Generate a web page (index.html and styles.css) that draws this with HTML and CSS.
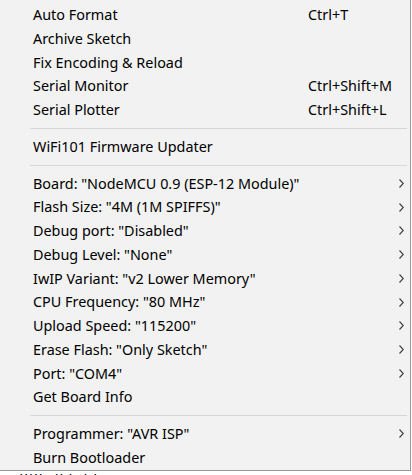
FILE: index.html
```html
<!DOCTYPE html>
<html>
<head>
<meta charset="utf-8">
<link rel="stylesheet" href="styles.css">
</head>
<body>
<div class="menu">
  <div class="group first">
    <div class="item"><span class="label">Auto Format</span><span class="key">Ctrl+T</span></div>
    <div class="item"><span class="label">Archive Sketch</span></div>
    <div class="item"><span class="label">Fix Encoding &amp; Reload</span></div>
    <div class="item"><span class="label">Serial Monitor</span><span class="key">Ctrl+Shift+M</span></div>
    <div class="item"><span class="label">Serial Plotter</span><span class="key">Ctrl+Shift+L</span></div>
  </div>
  <div class="sep"></div>
  <div class="group">
    <div class="item"><span class="label">WiFi101 Firmware Updater</span></div>
  </div>
  <div class="sep"></div>
  <div class="group">
    <div class="item sub"><span class="label">Board: "NodeMCU 0.9 (ESP-12 Module)"</span><svg class="arrow" viewBox="0 0 5 9"><path d="M0.5 0.5 L4.3 4.5 L0.5 8.5"/></svg></div>
    <div class="item sub"><span class="label">Flash Size: "4M (1M SPIFFS)"</span><svg class="arrow" viewBox="0 0 5 9"><path d="M0.5 0.5 L4.3 4.5 L0.5 8.5"/></svg></div>
    <div class="item sub"><span class="label">Debug port: "Disabled"</span><svg class="arrow" viewBox="0 0 5 9"><path d="M0.5 0.5 L4.3 4.5 L0.5 8.5"/></svg></div>
    <div class="item sub"><span class="label">Debug Level: "None"</span><svg class="arrow" viewBox="0 0 5 9"><path d="M0.5 0.5 L4.3 4.5 L0.5 8.5"/></svg></div>
    <div class="item sub"><span class="label">IwIP Variant: "v2 Lower Memory"</span><svg class="arrow" viewBox="0 0 5 9"><path d="M0.5 0.5 L4.3 4.5 L0.5 8.5"/></svg></div>
    <div class="item sub"><span class="label">CPU Frequency: "80 MHz"</span><svg class="arrow" viewBox="0 0 5 9"><path d="M0.5 0.5 L4.3 4.5 L0.5 8.5"/></svg></div>
    <div class="item sub"><span class="label">Upload Speed: "115200"</span><svg class="arrow" viewBox="0 0 5 9"><path d="M0.5 0.5 L4.3 4.5 L0.5 8.5"/></svg></div>
    <div class="item sub"><span class="label">Erase Flash: "Only Sketch"</span><svg class="arrow" viewBox="0 0 5 9"><path d="M0.5 0.5 L4.3 4.5 L0.5 8.5"/></svg></div>
    <div class="item sub"><span class="label">Port: "COM4"</span><svg class="arrow" viewBox="0 0 5 9"><path d="M0.5 0.5 L4.3 4.5 L0.5 8.5"/></svg></div>
    <div class="item"><span class="label">Get Board Info</span></div>
  </div>
  <div class="sep"></div>
  <div class="group last">
    <div class="item sub"><span class="label">Programmer: "AVR ISP"</span><svg class="arrow" viewBox="0 0 5 9"><path d="M0.5 0.5 L4.3 4.5 L0.5 8.5"/></svg></div>
    <div class="item"><span class="label">Burn Bootloader</span></div>
  </div>
</div>
<div class="below"><span class="peek">Elllll Ilklol lo</span></div>
</body>
</html>
```
FILE: styles.css
```css
html, body {
  margin: 0;
  padding: 0;
  background: #ffffff;
}

body {
  width: 412px;
  height: 475px;
  overflow: hidden;
  font-family: "Noto Sans", "Open Sans", sans-serif;
  font-size: 14.4px;
  color: #000000;
}

.menu {
  width: 411px;
  height: 471px;
  box-sizing: border-box;
  background: #f2f2f2;
  border-right: 1px solid #979797;
  border-bottom: 1px solid #979797;
  padding-top: 3px;
}

.item {
  display: flex;
  align-items: center;
  height: 23.75px;
  line-height: 23.75px;
  padding-left: 33px;
  white-space: nowrap;
}

.label {
  width: 275px;
  flex: none;
}

.key {
  flex: none;
}

.sub .label {
  flex: 1;
  width: auto;
}

.arrow {
  width: 5px;
  height: 9px;
  margin-right: 6px;
  flex: none;
  fill: none;
  stroke: #3c3c3c;
  stroke-width: 1.1;
}

.sep {
  height: 1px;
  background: #d7d7d7;
  margin: 6px 3px 6px 30px;
}

.below {
  height: 4px;
  overflow: hidden;
  padding-left: 10px;
}

.peek {
  display: block;
  font-size: 15px;
  line-height: 15px;
  margin-top: 1px;
  color: #000;
  letter-spacing: 1px;
}
```
